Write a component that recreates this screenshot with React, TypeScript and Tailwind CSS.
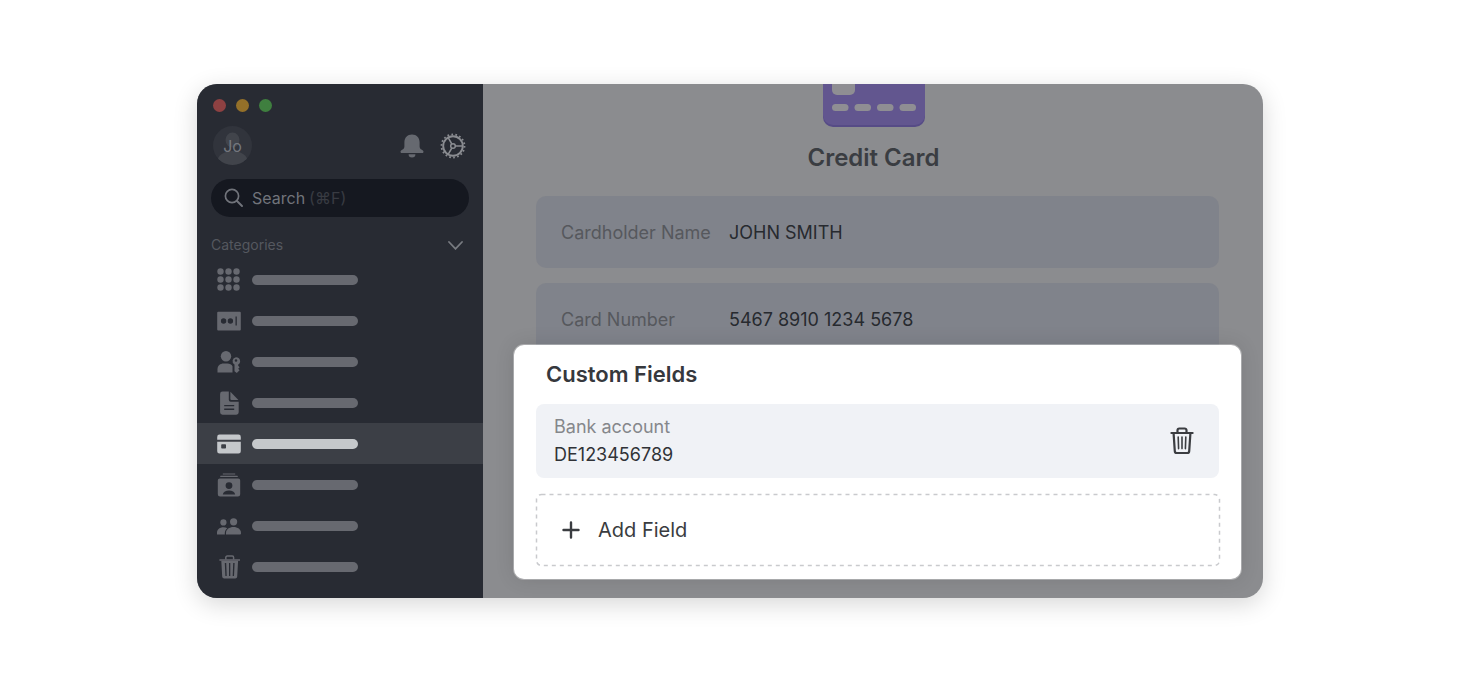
import { useState, type JSX } from 'react';

interface CardField {
  label: string;
  value: string;
}

interface Category {
  name: string;
  icon: JSX.Element;
}

const fields: CardField[] = [
  { label: 'Cardholder Name', value: 'JOHN SMITH' },
  { label: 'Card Number', value: '5467 8910 1234 5678' },
];

const GridIcon = () => (
  <svg width="24" height="24" viewBox="0 0 24 24" fill="currentColor">
    {[4, 12, 20].map((y) =>
      [4, 12, 20].map((x) => <circle key={`${x}-${y}`} cx={x - 0.5} cy={y - 0.5} r="3.2" />),
    )}
  </svg>
);

const PasswordIcon = () => (
  <svg width="24" height="24" viewBox="0 0 24 24" fill="currentColor">
    <path
      fillRule="evenodd"
      d="M1.2 2.8h21.6a1 1 0 0 1 1 1v16.6a1 1 0 0 1-1 1H1.2a1 1 0 0 1-1-1V3.800a1 1 0 0 1 1-1ZM6.600 9.300a2.700 2.700 0 1 0 0 5.400a2.700 2.700 0 1 0 0-5.400ZM13.400 9.300a2.700 2.700 0 1 0 0 5.400a2.700 2.700 0 1 0 0-5.400ZM18.500 7.600v9h1.300v-9Z"
    />
  </svg>
);

const UserKeyIcon = () => (
  <svg width="24" height="24" viewBox="0 0 24 24" fill="currentColor">
    <circle cx="9" cy="6.200" r="5.200" />
    <path d="M.5 22.500v-3.200c0-3.600 2.700-5.700 6.200-5.700h3.600c2.500 0 4.300 1 5.200 2.700v6.200Z" />
    <path
      fillRule="evenodd"
      d="M19 7.200a4 4 0 0 1 2.200 7.400v1.200l1.400 1.500-1.400 1.400 1.400 1.500-2.800 2.800-2.300-1.800v-6.600A4 4 0 0 1 19 7.200Zm0 2a1.300 1.300 0 1 0 0 2.600a1.300 1.300 0 1 0 0-2.600Z"
    />
  </svg>
);

const NoteIcon = () => (
  <svg width="24" height="24" viewBox="0 0 24 24" fill="currentColor">
    <path
      fillRule="evenodd"
      d="M5.500.5h6.300v8.200a2 2 0 0 0 2 2h7.900v10.600a2.400 2.400 0 0 1-2.400 2.400H5.500a2.400 2.400 0 0 1-2.400-2.400V2.900A2.400 2.400 0 0 1 5.500.5ZM7.200 14v1.300h10V14Zm0 3.600v1.300h10v-1.300Z"
    />
    <path d="M13.400.8l8 8.200h-7a1 1 0 0 1-1-1Z" />
  </svg>
);

const CardIcon = () => (
  <svg width="24" height="24" viewBox="0 0 24 24" fill="currentColor">
    <path d="M2.500 2.600h19a2.300 2.300 0 0 1 2.300 2.300v2.800H.2V4.900a2.300 2.300 0 0 1 2.300-2.300Z" />
    <path
      fillRule="evenodd"
      d="M.2 9.800h23.600v9.400a2.300 2.300 0 0 1-2.300 2.300h-19a2.300 2.300 0 0 1-2.300-2.300ZM5 12.200a.8.8 0 0 0-.8.8v2.800a.8.800 0 0 0 .8.8h3.200a.8.8 0 0 0 .8-.8V13a.8.8 0 0 0-.8-.8Z"
    />
  </svg>
);

const ContactsIcon = () => (
  <svg width="24" height="24" viewBox="0 0 24 24" fill="currentColor">
    <path d="M5.800.4h12.400v1.100H5.800ZM3.600 2.800h16.800l.6 1.300H3Z" />
    <path
      fillRule="evenodd"
      d="M2.800 5.600h18.400a2 2 0 0 1 2 2v13.600a2.300 2.300 0 0 1-2.300 2.300H3.100a2.300 2.300 0 0 1-2.300-2.300V7.600a2 2 0 0 1 2-2ZM12 9.200a3.400 3.400 0 1 0 0 6.800a3.400 3.400 0 1 0 0-6.800ZM5.800 21.500h12.400c-.4-2.700-3-4-6.200-4s-5.800 1.300-6.200 4Z"
    />
  </svg>
);

const PeopleIcon = () => (
  <svg width="24" height="24" viewBox="0 0 24 24" fill="currentColor">
    <circle cx="6.400" cy="8.400" r="3.100" />
    <circle cx="16.600" cy="7.800" r="3.600" />
    <path d="M0 20.500v-1.700c0-3.500 2.900-5.600 6.400-5.600 1.500 0 2.800.3 3.900 1-1.700 1.300-2.500 3-2.500 5v1.300Z" />
    <path d="M9 20.500v-1.600c0-3.600 3.400-5.900 7.500-5.900s7.500 2.300 7.500 5.900v.6a1 1 0 0 1-1 1Z" />
  </svg>
);

const BinIcon = () => (
  <svg width="24" height="24" viewBox="0 0 24 24" fill="currentColor">
    <path d="M8.800 4.500V2.400A1.400 1.400 0 0 1 10.200 1h5a1.400 1.400 0 0 1 1.400 1.400v2.100" fill="none" stroke="currentColor" strokeWidth="1.500" />
    <path d="M2.400 4.300h20.600v1.500H2.400Z" />
    <path
      fillRule="evenodd"
      d="M4.300 5.800h16.800l-.9 16a2 2 0 0 1-2 1.800H7.200a2 2 0 0 1-2-1.800ZM7.800 8l.6 13h1.300L9.200 8Zm4.200 0v13h1.300V8Zm4.200 0-.5 13H17l.6-13Z"
    />
  </svg>
);

const BellIcon = () => (
  <svg width="24" height="24" viewBox="0 0 24 24" fill="currentColor">
    <path d="M12 .5c4.600 0 7.600 3.300 7.600 7.800v4.200c0 1.600.8 2.600 2.300 3.300 1 .5 1.600 1.200 1.600 2s-.6 1.200-1.400 1.200H1.900c-.8 0-1.400-.4-1.400-1.200s.6-1.500 1.600-2c1.500-.7 2.300-1.700 2.300-3.300V8.300C4.400 3.800 7.400.5 12 .5Z" />
    <path d="M8.600 20.300h6.800a3.400 3.200 0 0 1-6.800 0Z" />
  </svg>
);

const GearIcon = () => (
  <svg width="26" height="26" viewBox="0 0 26 26" fill="none" stroke="currentColor">
    <circle cx="13" cy="13" r="9.800" strokeWidth="1.900" />
    <circle cx="13" cy="13" r="11.500" strokeWidth="1.800" strokeDasharray="1.700 2.315" />
    <circle cx="13" cy="13" r="2.300" strokeWidth="1.500" />
    <path d="M15.300 13H23M11.850 11 8 4.340M11.850 15 8 21.660" strokeWidth="1.500" />
  </svg>
);

const SearchIcon = () => (
  <svg width="20" height="20" viewBox="0 0 20 20" fill="none" stroke="currentColor" strokeWidth="1.700" strokeLinecap="round">
    <circle cx="8" cy="8" r="6.600" />
    <path d="m13 13 5 5" strokeWidth="2" />
  </svg>
);

const TrashIcon = () => (
  <svg width="24" height="28" viewBox="0 0 24 28" fill="none" stroke="currentColor" strokeWidth="2.200" strokeLinecap="round" strokeLinejoin="round">
    <path d="M1.400 6h21.200" />
    <path d="M7.500 6V3.300a1.800 1.800 0 0 1 1.800-1.800h5.400a1.800 1.800 0 0 1 1.800 1.800V6" />
    <path d="m3.600 6.400 1.200 17.700a2 2 0 0 0 2 1.900h10.400a2 2 0 0 0 2-1.900l1.200-17.700" />
    <path d="m8.200 10 .4 11.600M12 10v11.600M15.800 10l-.4 11.600" strokeWidth="1.600" />
  </svg>
);

const CreditCardArt = () => (
  <svg width="104" height="43" viewBox="0 0 104 43">
    <path d="M1 0h102v33a10 10 0 0 1-10 10H11A10 10 0 0 1 1 33Z" fill="#564b86" />
    <path d="M1 0h102v31a10 10 0 0 1-10 10H11A10 10 0 0 1 1 31Z" fill="#62568f" />
    <path d="M10 0h23v6a5 5 0 0 1-5 5H15a5 5 0 0 1-5-5Z" fill="#8f8e93" />
    {[10, 32.500, 55, 77.500].map((x) => (
      <rect key={x} x={x} y="20" width="16.500" height="7" rx="3.500" fill="#8f8e93" />
    ))}
  </svg>
);

const categories: Category[] = [
  { name: 'All items', icon: <GridIcon /> },
  { name: 'Passwords', icon: <PasswordIcon /> },
  { name: 'Logins', icon: <UserKeyIcon /> },
  { name: 'Notes', icon: <NoteIcon /> },
  { name: 'Credit cards', icon: <CardIcon /> },
  { name: 'Contacts', icon: <ContactsIcon /> },
  { name: 'Shared', icon: <PeopleIcon /> },
  { name: 'Trash', icon: <BinIcon /> },
];

function Sidebar(): JSX.Element {
  const [active, setActive] = useState('Credit cards');

  return (
    <aside className="w-[286px] shrink-0 bg-[#282b33] pt-[15px] pb-[11px]">
      <div className="flex gap-[10px] pl-4">
        <span className="size-[13px] rounded-full bg-[#8e4142]" />
        <span className="size-[13px] rounded-full bg-[#947029]" />
        <span className="size-[13px] rounded-full bg-[#3f7f3f]" />
      </div>

      <div className="mt-[14px] flex items-center pr-[17px] pl-4">
        <div className="relative flex size-[39px] items-center justify-center overflow-hidden rounded-full bg-[#31343c]">
          <svg className="absolute inset-0" width="39" height="39" viewBox="0 0 39 39" fill="#41444b">
            <ellipse cx="19.500" cy="14" rx="7" ry="7.500" />
            <ellipse cx="19.500" cy="35" rx="15" ry="10" />
          </svg>
          <span className="relative text-base text-[#74777e]">Jo</span>
        </div>
        <button type="button" aria-label="Notifications" className="ml-auto text-[#666970]">
          <BellIcon />
        </button>
        <button type="button" aria-label="Settings" className="ml-4 text-[#8a8c91]">
          <GearIcon />
        </button>
      </div>

      <label className="mt-[14px] mr-[14px] ml-[14px] flex h-[38px] items-center rounded-full bg-[#151820] pl-[13px] text-base text-[#383b42]">
        <span className="mr-2 text-[#71747b]">
          <SearchIcon />
        </span>
        <input
          type="search"
          aria-label="Search"
          placeholder="Search"
          className="field-sizing-content bg-transparent outline-none placeholder:text-[#71747b]"
        />
        <span className="ml-1">(⌘F)</span>
      </label>

      <button type="button" className="mt-[14px] flex h-7 w-full items-center justify-between pr-5 pl-[14px] text-sm text-[#55585f]">
        Categories
        <svg width="15" height="9" viewBox="0 0 15 9" fill="none" stroke="#787b81" strokeWidth="1.800" strokeLinecap="round">
          <path d="m1 1 6.500 6.800L14 1" />
        </svg>
      </button>

      <nav>
        {categories.map((category) => (
          <button
            key={category.name}
            type="button"
            aria-label={category.name}
            onClick={() => setActive(category.name)}
            className={`flex h-[41px] w-full items-center gap-[11px] pl-5 ${category.name === active
              ? 'bg-[#3c3f46] text-[#c5c8cb]'
              : 'text-[#676970]'
              }`}
          >
            {category.icon}
            <span className="h-[10px] w-[106px] rounded-full bg-current" />
          </button>
        ))}
      </nav>
    </aside>
  );
}

function CustomFields(): JSX.Element {
  return (
    <section className="relative -mt-[10px] rounded-[10px] bg-white px-[22px] pt-[11px] pb-[14px] shadow-[0_0_0_1px_rgba(255,255,255,0.3),0_0_20px_rgba(0,0,0,0.12)]">
      <h2 className="pl-[10px] text-[22px] leading-9 font-semibold text-[#36383d]">Custom Fields</h2>

      <div className="mt-3 flex h-[74px] items-center justify-between rounded-lg bg-[#f0f2f6] pr-[25px] pl-[18px]">
        <dl className="text-[18px] leading-7">
          <dt className="text-[#85878b]">Bank account</dt>
          <dd className="text-[#303237]">DE123456789</dd>
        </dl>
        <button type="button" aria-label="Delete field" className="text-[#3b3d41]">
          <TrashIcon />
        </button>
      </div>

      <button type="button" className="relative mt-4 flex h-[71px] w-full items-center gap-[18px] pl-[26px] text-[20px] text-[#3a3c40]">
        <svg className="absolute inset-0 size-full overflow-visible" fill="none" stroke="#c9cacd" strokeWidth="1.500" strokeDasharray="4 4">
          <rect x="0.5" y="0.5" width="100%" height="100%" rx="5" />
        </svg>
        <svg width="18" height="18" viewBox="0 0 18 18" fill="none" stroke="currentColor" strokeWidth="2.400" strokeLinecap="round">
          <path d="M9 1.500v15M1.500 9h15" />
        </svg>
        Add Field
      </button>
    </section>
  );
}

export default function App(): JSX.Element {
  return (
    <div className="min-h-screen bg-white px-6 pt-[84px] font-['Inter','DejaVu_Sans',sans-serif]">
      <div className="mx-auto flex max-w-[1066px] overflow-hidden rounded-[20px] bg-[#8b8c8f] shadow-[0_6px_24px_rgba(0,0,0,0.16)]">
        <Sidebar />

        <main className="min-w-0 flex-1 pr-[22px] pb-[19px] pl-[31px]">
          <header className="flex flex-col items-center pr-2">
            <CreditCardArt />
            <h1 className="mt-[15px] text-[24px] leading-8 font-semibold text-[#3a3d42]">Credit Card</h1>
          </header>

          <dl className="mt-[22px] flex flex-col gap-[15px] px-[22px] text-[18px]">
            {fields.map((field) => (
              <div key={field.label} className="flex h-[72px] items-center rounded-[10px] bg-[#80838b] pl-[25px]">
                <dt className="w-[168px] text-[#56585d]">{field.label}</dt>
                <dd className="text-[#272a2f]">{field.value}</dd>
              </div>
            ))}
          </dl>

          <CustomFields />
        </main>
      </div>
    </div>
  );
}
